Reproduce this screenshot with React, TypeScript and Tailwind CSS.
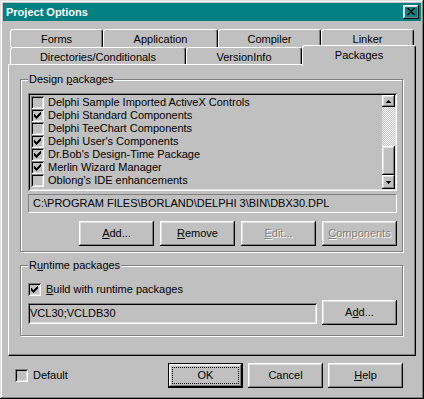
import React from "react";

const raised =
  "shadow-[inset_-1px_-1px_0_#000,inset_1px_1px_0_#fff,inset_-2px_-2px_0_#808080,inset_2px_2px_0_#dfdfdf]";
const sunken =
  "shadow-[inset_1px_1px_0_#808080,inset_-1px_-1px_0_#fff,inset_2px_2px_0_#000,inset_-2px_-2px_0_#dfdfdf]";
const etched = "border border-[#808080] shadow-[1px_1px_0_#fff,inset_1px_1px_0_#fff]";
const disabledText = "text-[#808080] [text-shadow:1px_1px_0_#fff]";

const CHECK = ["......#", ".....##", "#...###", "##.###.", "#####..", ".###...", "..#...."];
const CLOSE = ["##....##", ".##..##.", "..####..", "...##...", "..####..", ".##..##.", "##....##"];
const UP = ["..#..", ".###.", "#####"];
const DOWN = ["#####", ".###.", "..#.."];

// little pixel-art glyphs (check marks, arrows, close box)
const Pixels = ({ rows }: { rows: string[] }) => (
  <svg width={rows[0].length} height={rows.length} shapeRendering="crispEdges" className="block">
    {rows.flatMap((r, y) =>
      r.split("").map((c, x) =>
        c === "#" ? <rect key={`${x}-${y}`} x={x} y={y} width={1} height={1} fill="#000" /> : null
      )
    )}
  </svg>
);

const CheckBox = ({ checked }: { checked?: boolean }) => (
  <span className={`flex h-[13px] w-[13px] shrink-0 items-center justify-center bg-[#c0c0c0] ${sunken}`}>
    {checked && <Pixels rows={CHECK} />}
  </span>
);

const Btn = ({ children, disabled }: { children: React.ReactNode; disabled?: boolean }) => (
  <button
    type="button"
    className={`flex h-[25px] w-[75px] items-center justify-center text-[11px] leading-[13px] ${raised} ${
      disabled ? disabledText : "text-black"
    }`}
  >
    {children}
  </button>
);

const Tab = ({ label, w, selected }: { label: string; w: string; selected?: boolean }) => (
  <div
    className={`flex shrink-0 justify-center rounded-t-[3px] border-l border-t border-r border-white border-r-black bg-[#c0c0c0] pt-[2px] text-[11px] leading-[14px] text-black shadow-[inset_-1px_0_0_#808080] ${w} ${
      selected ? "h-[21px] -mb-[2px]" : "h-full"
    }`}
  >
    {label}
  </div>
);

const GroupBox = ({ label, h, children }: { label: React.ReactNode; h: string; children: React.ReactNode }) => (
  <div className={`relative w-[383px] ${h} ${etched}`}>
    <span className="absolute -top-[8px] left-[7px] bg-[#c0c0c0] px-[1px] text-[11px] leading-[14px] text-black">
      {label}
    </span>
    {children}
  </div>
);

const packages = [
  { name: "Delphi Sample Imported ActiveX Controls", on: false },
  { name: "Delphi Standard Components", on: true },
  { name: "Delphi TeeChart Components", on: false },
  { name: "Delphi User's Components", on: true },
  { name: "Dr.Bob's Design-Time Package", on: true },
  { name: "Merlin Wizard Manager", on: true },
  { name: "Oblong's IDE enhancements", on: false },
];

export default function App() {
  return (
    <div
      className={`flex h-[399px] w-[424px] flex-col bg-[#c0c0c0] p-[3px] font-['Liberation_Sans',Arial,sans-serif] shadow-[inset_-1px_-1px_0_#000,inset_1px_1px_0_#dfdfdf,inset_-2px_-2px_0_#808080,inset_2px_2px_0_#fff]`}
    >
      {/* Title bar */}
      <div className="flex h-[18px] shrink-0 items-center justify-between bg-[#008080] pl-[3px] pr-[2px]">
        <span className="text-[11px] font-bold leading-[14px] text-white">Project Options</span>
        <div className={`flex h-[14px] w-[16px] justify-center pt-[3px] ${raised}`}>
          <Pixels rows={CLOSE} />
        </div>
      </div>

      {/* Tabs */}
      <div className="ml-[7px] mt-[8px] flex h-[18px]">
        <Tab label="Forms" w="w-[93px]" />
        <Tab label="Application" w="w-[115px]" />
        <Tab label="Compiler" w="w-[103px]" />
        <Tab label="Linker" w="w-[93px]" />
      </div>
      <div className="relative z-10 ml-[7px] flex h-[17px] items-end">
        <Tab label="Directories/Conditionals" w="w-[176px]" />
        <Tab label="VersionInfo" w="w-[116px]" />
        <Tab label="Packages" w="w-[114px]" selected />
      </div>

      {/* Tab page */}
      <div className="ml-[5px] h-[292px] w-[408px] border border-white border-b-black border-r-black pl-[11px] pt-[14px] shadow-[inset_-1px_-1px_0_#808080]">
        <GroupBox
          h="h-[173px]"
          label={
            <>
              Design <u>p</u>ackages
            </>
          }
        >
          <div className="pl-[7px] pt-[13px]">
            <div className={`flex h-[98px] w-[369px] p-[2px] ${sunken}`}>
              <div className="flex-1 pl-[1px] pt-[1px]">
                {packages.map((p) => (
                  <div key={p.name} className="flex h-[13px] items-center gap-[4px]">
                    <CheckBox checked={p.on} />
                    <span className="whitespace-nowrap text-[11px] leading-[13px] text-black">{p.name}</span>
                  </div>
                ))}
              </div>
              <div className="flex w-[13px] flex-col">
                <div className={`flex h-[12px] items-center justify-center ${raised}`}>
                  <Pixels rows={UP} />
                </div>
                <div className="h-[39px] bg-[repeating-conic-gradient(#fff_0%_25%,#c0c0c0_0%_50%)] bg-size-[2px_2px]" />
                <div className={`h-[29px] ${raised}`} />
                <div className={`flex h-[14px] items-center justify-center ${raised}`}>
                  <Pixels rows={DOWN} />
                </div>
              </div>
            </div>

            <div className="mt-[3px] flex h-[19px] w-[369px] items-center border border-[#808080] border-b-white border-r-white pl-[4px] text-[11px] leading-[13px] text-black">
              C:\PROGRAM FILES\BORLAND\DELPHI 3\BIN\DBX30.DPL
            </div>

            <div className="mt-[8px] flex w-[369px] justify-end gap-[6px]">
              <Btn>
                <u>A</u>dd...
              </Btn>
              <Btn>
                <u>R</u>emove
              </Btn>
              <Btn disabled>
                <u>E</u>dit...
              </Btn>
              <Btn disabled>
                <u>C</u>omponents
              </Btn>
            </div>
          </div>
        </GroupBox>

        <div className="mt-[13px]">
          <GroupBox
            h="h-[71px]"
            label={
              <>
                R<u>u</u>ntime packages
              </>
            }
          >
            <div className="pl-[7px] pt-[17px]">
              <div className="flex h-[13px] items-center gap-[5px]">
                <CheckBox checked />
                <span className="text-[11px] leading-[13px] text-black">
                  <u>B</u>uild with runtime packages
                </span>
              </div>
              <div className="mt-[4px] flex items-start gap-[5px]">
                <div className={`mt-[3px] flex h-[21px] w-[289px] items-center pl-[2px] text-[11px] leading-[13px] text-black ${sunken}`}>
                  VCL30;VCLDB30
                </div>
                <Btn>
                  A<u>d</u>d...
                </Btn>
              </div>
            </div>
          </GroupBox>
        </div>
      </div>

      {/* Bottom buttons */}
      <div className="mt-[7px] flex h-[25px] items-center pl-[12px]">
        <CheckBox />
        <span className="ml-[5px] text-[11px] leading-[13px] text-black">Default</span>
        <div className="ml-auto mr-[18px] flex gap-[5px]">
          <div className="relative flex h-[25px] w-[75px] border border-black">
            <div className={`flex flex-1 items-center justify-center text-[11px] leading-[13px] text-black ${raised}`}>
              OK
            </div>
            <span className="absolute inset-[3px] border border-dotted border-black" />
          </div>
          <Btn>Cancel</Btn>
          <Btn>
            <u>H</u>elp
          </Btn>
        </div>
      </div>
    </div>
  );
}
